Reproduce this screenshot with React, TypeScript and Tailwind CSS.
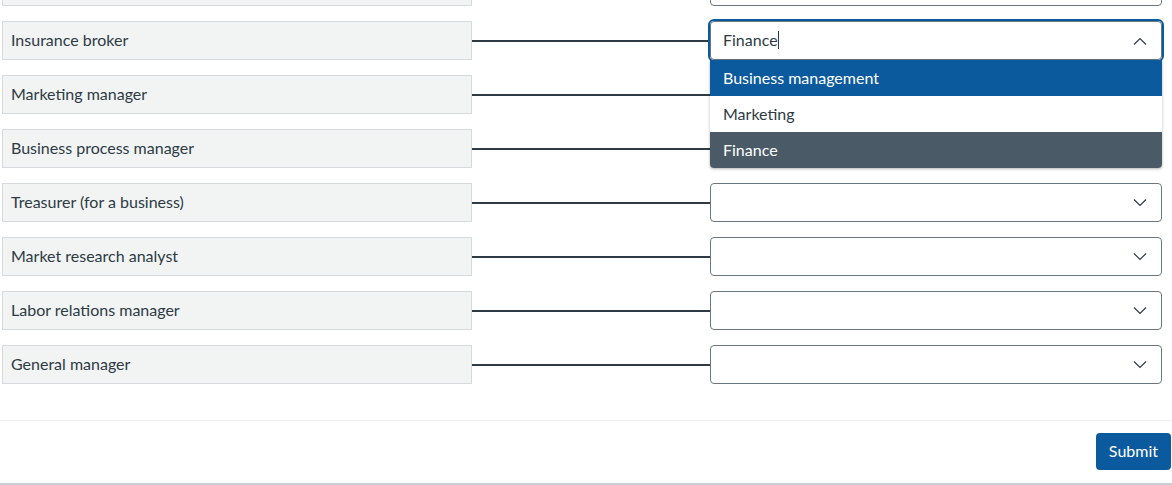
import React from "react";

type Row = {
	label: string;
	value: string;
};

// first row is scrolled mostly out of view
const ROWS: Row[] = [
	{ label: "", value: "" },
	{ label: "Insurance broker", value: "Finance" },
	{ label: "Marketing manager", value: "" },
	{ label: "Business process manager", value: "" },
	{ label: "Treasurer (for a business)", value: "" },
	{ label: "Market research analyst", value: "" },
	{ label: "Labor relations manager", value: "" },
	{ label: "General manager", value: "" },
];

const OPTIONS = ["Business management", "Marketing", "Finance"];

function Chevron({ up }: { up?: boolean }) {
	return (
		<svg width="14" height="8" viewBox="0 0 14 8" fill="none" className="shrink-0">
			<polyline
				points={up ? "1,7.5 7,1.5 13,7.5" : "1,0.5 7,6.5 13,0.5"}
				stroke="#2d3b45"
				strokeWidth="1.2"
			/>
		</svg>
	);
}

function MatchRow({ row, open }: { row: Row; open: boolean }) {
	return (
		<div className="flex items-center h-[39px]">
			<div className="w-[470px] h-full shrink-0 flex items-center px-[8px] pb-[2px] bg-[#f2f3f3] border border-[#d7dadc] text-[16px] text-[#2d3b45]">
				{row.label}
			</div>
			<div className="w-[238px] shrink-0 h-[2px] bg-[#2d3b45]" />
			<div className="relative w-[452px] h-full shrink-0">
				<div
					className={
						open
							? "h-full flex items-center pl-[12px] pr-[14px] bg-white border border-[#6b7780] rounded-[4px] outline-2 outline-offset-[0px] outline-[#0b5a9e]"
							: "h-full flex items-center pl-[12px] pr-[14px] bg-white border border-[#6b7780] rounded-[4px]"
					}
				>
					<span className="flex-1 pb-[2px] text-[16px] text-[#2d3b45] flex items-center">
						{row.value}
						{open && <span className="inline-block w-px h-[18px] bg-[#2d3b45]" />}
					</span>
					<Chevron up={open} />
				</div>
				{open && (
					<ul className="absolute left-0 right-0 top-full z-10 bg-white rounded-b-[4px] overflow-hidden shadow-[0_1px_3px_rgba(0,0,0,0.3)] text-[16px]">
						{OPTIONS.map((opt, i) => (
							<li
								key={opt}
								className={
									i === 0
										? "h-[36px] flex items-center px-[13px] pb-px bg-[#0b5a9e] text-white"
										: i === 2
											? "h-[36px] flex items-center px-[13px] pb-px bg-[#4a5a67] text-white"
											: "h-[36px] flex items-center px-[13px] pb-px bg-white text-[#2d3b45]"
								}
							>
								{opt}
							</li>
						))}
					</ul>
				)}
			</div>
		</div>
	);
}

export default function App() {
	return (
		<div className="w-[1172px] h-[485px] overflow-hidden bg-white font-['Lato','Liberation_Sans',sans-serif]">
			<div className="flex flex-col gap-[15px] pl-[2px] -mt-[33px]">
				{ROWS.map((row, i) => (
					<MatchRow key={i} row={row} open={i === 1} />
				))}
			</div>
			<div className="mt-[36px] border-t border-[#eceeef] border-b-2 border-b-[#c7cdd1] flex justify-end pt-[12px] pb-[13px] pr-px">
				<button
					type="button"
					className="h-[37px] px-[13px] pb-px rounded-[4px] bg-[#0b5a9e] text-white text-[16px]"
				>
					Submit
				</button>
			</div>
		</div>
	);
}
